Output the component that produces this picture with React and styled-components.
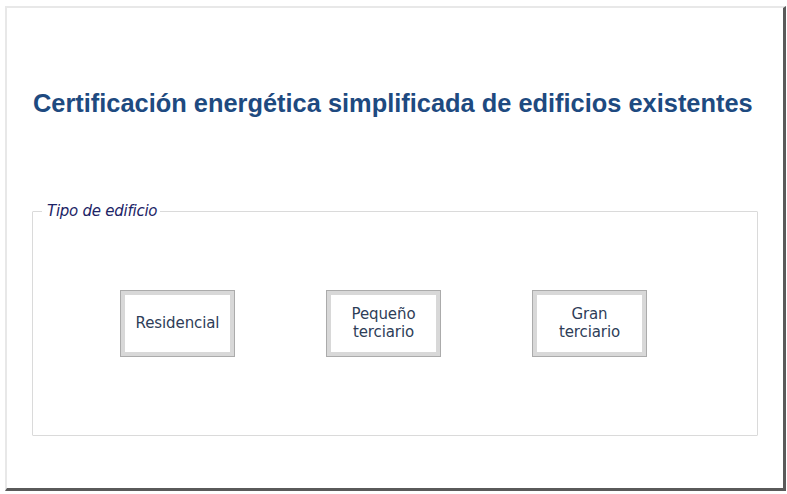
import React from "react";
import styled, { createGlobalStyle } from "styled-components";

const GlobalStyle = createGlobalStyle`
  html, body {
    margin: 0;
    padding: 0;
    background: #ffffff;
  }
`;

const Window = styled.div`
  box-sizing: border-box;
  margin: 6px 0 0 5px;
  width: 781px;
  height: 485px;
  border-top: 2px solid #e8e8e8;
  border-left: 2px solid #e8e8e8;
  border-right: 3px solid #5a5a5a;
  border-bottom: 3px solid #5a5a5a;
  background: #fff;
  display: flex;
  flex-direction: column;
  padding: 0 0 0 25px;
`;

const Title = styled.h1`
  margin: 80px 0 0 1px;
  font-family: "Liberation Sans", Arial, sans-serif;
  font-weight: bold;
  font-size: 25.4px;
  line-height: 30px;
  color: #1e4a80;
  white-space: nowrap;
`;

const Group = styled.fieldset`
  box-sizing: border-box;
  margin: 85px 0 0 0;
  width: 726px;
  height: 233px;
  padding: 0;
  border: 1px solid #dadada;
  border-radius: 1px;
`;

const Legend = styled.legend`
  margin-left: 9px;
  padding: 0 3px 0 5px;
  font-family: "DejaVu Sans", Tahoma, sans-serif;
  font-style: italic;
  font-size: 15px;
  line-height: 16px;
  letter-spacing: -0.25px;
  color: #1c2466;
`;

const ButtonRow = styled.div`
  display: flex;
  gap: 91px;
  padding: 71px 0 0 87px;
`;

const ChoiceButton = styled.button`
  box-sizing: border-box;
  width: 115px;
  height: 67px;
  background: #fff;
  border: 1px solid #ababab;
  box-shadow: inset 0 0 0 4px #d8d8d8;
  display: flex;
  align-items: center;
  justify-content: center;
  text-align: center;
  font-family: "DejaVu Sans", Tahoma, sans-serif;
  font-size: 15px;
  line-height: 18px;
  letter-spacing: -0.1px;
  color: #2e3d58;
  padding: 0 0 2px;
  cursor: pointer;
`;

export default function App() {
  return (
    <>
      <GlobalStyle />
      <Window>
        <Title>Certificación energética simplificada de edificios existentes</Title>
        <Group>
          <Legend>Tipo de edificio</Legend>
          <ButtonRow>
            <ChoiceButton>Residencial</ChoiceButton>
            <ChoiceButton>
              Pequeño
              <br />
              terciario
            </ChoiceButton>
            <ChoiceButton>
              Gran
              <br />
              terciario
            </ChoiceButton>
          </ButtonRow>
        </Group>
      </Window>
    </>
  );
}
